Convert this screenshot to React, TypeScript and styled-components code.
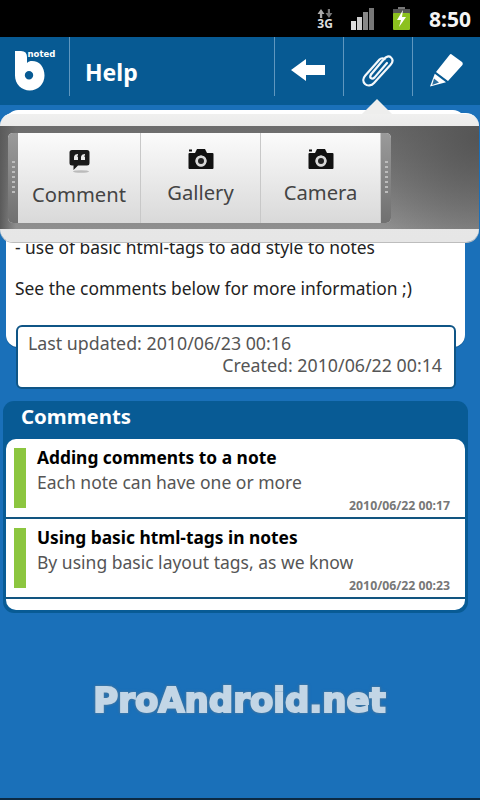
import React from "react";
import styled, { createGlobalStyle } from "styled-components";

const Global = createGlobalStyle`
  html, body { margin: 0; padding: 0; background: #1a70b9; }
  * { box-sizing: border-box; }
`;

const Screen = styled.div`
  position: relative;
  width: 480px;
  height: 800px;
  overflow: hidden;
  display: flex;
  flex-direction: column;
  background: #1a70b9;
  font-family: "Noto Sans", "Open Sans", sans-serif;
  border-bottom: 2px solid #0b2a44;
`;

const StatusBar = styled.div`
  height: 37px;
  flex: none;
  background: #000;
  display: flex;
  align-items: center;
  justify-content: flex-end;
  padding-right: 9px;
`;

const StatusClock = styled.span`
  color: #f4f4f4;
  font: 700 21px "Noto Sans", sans-serif;
  margin-left: 19px;
`;

const StatusIconGap = styled.span<{ $w: number }>`
  display: flex;
  flex-direction: column;
  align-items: center;
  width: ${(p) => p.$w}px;
  margin-left: 18px;
`;

const NetLabel = styled.span`
  color: #ddd;
  font: 700 12px/11px "Noto Sans", sans-serif;
`;

const Header = styled.header`
  height: 68px;
  flex: none;
  background: #075a93;
  display: flex;
  align-items: flex-start;
`;

const HeaderCell = styled.div<{ $w: number }>`
  width: ${(p) => p.$w}px;
  height: 59px;
  flex: none;
  display: flex;
  align-items: center;
  justify-content: center;
  padding-top: 7px;
  border-right: 1px solid #5f97bf;
  &:last-child { border-right: none; }
`;

const TitleCell = styled.div`
  flex: 1;
  height: 59px;
  display: flex;
  align-items: center;
  padding: 10px 0 0 15px;
  border-right: 1px solid #5f97bf;
`;

const Title = styled.h1`
  margin: 0;
  color: #fff;
  font-size: 23px;
  font-weight: 700;
  line-height: 30px;
`;

const LogoWrap = styled.div`
  position: relative;
  width: 42px;
  height: 40px;
  margin-left: 2px;
  margin-top: 1px;
`;

const LogoWord = styled.span`
  position: absolute;
  left: 13px;
  top: -2px;
  color: #fff;
  font: 700 8.5px "DejaVu Sans", sans-serif;
`;

const Body = styled.main`
  flex: 1;
  display: flex;
  flex-direction: column;
  padding: 5px 3px 0 3px;
`;

const NoteCard = styled.section`
  height: 237px;
  margin: 0 12px 0 3px;
  padding: 0 10px 8px 9px;
  background: #fff;
  border-radius: 12px;
  box-shadow: 0 1px 0 #0d5a96;
  display: flex;
  flex-direction: column;
  justify-content: flex-end;
  color: #222;
  font-size: 17.4px;
  line-height: 20.5px;
`;

const NoteLine = styled.p`
  margin: 0 0 20.5px;
  white-space: nowrap;
  &:last-child { margin-bottom: 0; }
`;

const MetaBox = styled.div`
  position: relative;
  height: 64px;
  margin: -22px 21px 0 13px;
  padding: 5px 12px 0 10px;
  background: #fff;
  border: 2px solid #0f5586;
  border-radius: 6px;
  color: #555;
  font-size: 17.8px;
  line-height: 22px;
`;

const MetaRight = styled.div`
  text-align: right;
`;

const CommentsPanel = styled.section`
  margin: 12px 9px 0 0;
  padding: 0 3px 3px;
  background: #085b95;
  border-radius: 11px;
`;

const CommentsHead = styled.h2`
  margin: 0;
  height: 38px;
  padding-left: 15px;
  color: #fff;
  font-size: 20.4px;
  font-weight: 700;
  line-height: 31px;
`;

const CommentList = styled.div`
  background: #fff;
  border-radius: 10px;
  padding-bottom: 11px;
`;

const Row = styled.article`
  position: relative;
  height: 80px;
  display: flex;
  padding: 9px 0 0 8px;
  border-bottom: 2px solid #125580;
`;

const Marker = styled.span`
  width: 12px;
  height: 60px;
  flex: none;
  background: #8cc63f;
`;

const RowText = styled.div`
  margin: -1px 0 0 11px;
`;

const RowTitle = styled.div`
  color: #000;
  font-size: 17.35px;
  font-weight: 700;
  line-height: 20px;
`;

const RowSub = styled.div`
  color: #555;
  font-size: 17.5px;
  line-height: 24px;
  margin-top: 3px;
`;

const RowDate = styled.time`
  position: absolute;
  right: 15px;
  bottom: 4px;
  color: #777;
  font-size: 12.25px;
  font-weight: 700;
  line-height: 14px;
`;

const Watermark = styled.div`
  margin-top: 67px;
  text-align: center;
  margin-right: 1px;
  font: 700 34px/40px "DejaVu Sans", sans-serif;
  color: #c3d6e6;
  -webkit-text-stroke: 2px #c3d6e6;
  filter: drop-shadow(0 0 1px #3f74a0) drop-shadow(0 0 1px #3f74a0);
`;

/* overlay */
const Popup = styled.div`
  position: absolute;
  left: 0;
  top: 113px;
  width: 479px;
  height: 129px;
  padding: 12px 0 13px;
  background: linear-gradient(#f0f0ef, #e9e9e9 12%, #e6e6e6);
  border-radius: 13px;
  border-top: 1px solid #fff;
  box-shadow: 0 1px 0 #bdbdbd;
`;

const PopupArrow = styled.span`
  position: absolute;
  left: 362px;
  top: -15px;
  width: 0;
  height: 0;
  border-left: 15px solid transparent;
  border-right: 15px solid transparent;
  border-bottom: 15px solid #eeeeed;
`;

const Band = styled.div`
  height: 103px;
  padding: 7px 0 0 8px;
  background:
    radial-gradient(circle at 100% 10%, #555 0, rgba(85, 85, 85, 0) 130px),
    linear-gradient(90deg, #5a5a5a 0, rgba(90, 90, 90, 0) 16px),
    linear-gradient(#6c6c6c, #8f8f8f);
`;

const Tray = styled.div`
  width: 383px;
  height: 90px;
  display: flex;
  border-radius: 5px;
  overflow: hidden;
  background: linear-gradient(#fbfbfb, #d9d9d9);
`;

const Handle = styled.div`
  width: 10px;
  flex: none;
  background: linear-gradient(#9a9a9a, #707070);
  display: flex;
  align-items: center;
  justify-content: center;
`;

const Dots = styled.span`
  width: 3px;
  height: 34px;
  background: repeating-linear-gradient(#bcbcbc 0 2px, transparent 2px 5px);
`;

const Action = styled.div<{ $w: number; $low?: boolean }>`
  width: ${(p) => p.$w}px;
  flex: none;
  display: flex;
  flex-direction: column;
  align-items: center;
  padding-top: ${(p) => (p.$low ? 16 : 14)}px;
  border-right: 1px solid #c8c8c8;
  color: #444;
  font-size: 20.2px;
  line-height: 32px;
  &:last-of-type { border-right: none; }
`;

const ActionIcon = styled.span`
  display: flex;
  height: 24px;
  margin-bottom: 5px;
`;

const Arrow = () => (
  <svg width="36" height="22" viewBox="0 0 36 22">
    <path d="M0 11 L15 0 V6 H34 V16 H15 V22 Z" fill="#fff" />
  </svg>
);

const Clip = () => (
  <svg width="34" height="34" viewBox="0 0 34 34" fill="none" stroke="#f4f8fb" strokeWidth="2.2" strokeLinecap="round" strokeLinejoin="round">
    <path d="M10 21.5 L23 6 C25 3.5 28 2.5 30 4.5 C32.2 6.5 31.6 9.5 29.6 11.8 L13 30 C10.5 32.8 6.5 33.4 4 31 C1.5 28.6 2 25 4.3 22.4 L18.5 6.5 C20.2 4.8 22.4 5 23.6 6.2" />
    <path d="M10 21.5 C9 23 9 24.4 10 25.2 C11 26 12.4 25.6 13.6 24.4 L26 10" />
  </svg>
);

const Pencil = () => (
  <svg width="33" height="33" viewBox="0 0 33 33">
    <path d="M21 0 L32 8 Q33.5 9.5 32 11.5 L18 27 L6 18 L19.5 1 Q20 0 21 0 Z" fill="#fff" />
    <path d="M4.8 19.8 L16 28.2 L0 32.5 Z" fill="#fff" />
    <path d="M4 24.5 L9 28.5 L2.2 31 Z" fill="#2b6f9f" />
  </svg>
);

const LogoB = () => (
  <svg width="30" height="40" viewBox="0 0 30 40" style={{ position: "absolute", left: 0, top: 0 }}>
    <path fillRule="evenodd" fill="#fff" d="M0 0 H6 Q12 0 12 6 V12 C13.5 10.5 15 10 17 10 C24.5 10 29.5 16 29.5 24.5 C29.5 33 23 39.5 14.8 39.5 C6.5 39.5 0 33 0 24.5 Z M14 20 A4.2 4.2 0 1 0 14.01 28.4 A4.2 4.2 0 1 0 14 20 Z" />
  </svg>
);

const NetArrows = () => (
  <svg width="16" height="9" viewBox="0 0 16 9">
    <path d="M0.5 5 L4 0 L7.5 5 H5.2 V9 H2.9 V5 Z" fill="#aaa" />
    <path d="M8.5 4 H10.8 V0 H13 V4 H15.4 L12 9 Z" fill="#777" />
  </svg>
);

const Signal = () => (
  <svg width="24" height="22" viewBox="0 0 24 22">
    <rect x="0" y="13" width="5" height="9" fill="#ddd" />
    <rect x="6" y="9" width="5" height="13" fill="#ccc" />
    <rect x="12" y="4" width="5" height="18" fill="#888" />
    <rect x="18" y="0" width="5" height="22" fill="#777" />
  </svg>
);

const Battery = () => (
  <svg width="17" height="23" viewBox="0 0 17 23">
    <rect x="5" y="0" width="7" height="3" fill="#777" />
    <rect x="0" y="2" width="17" height="5" fill="#555" />
    <rect x="0" y="6" width="17" height="17" fill="#8cc11f" rx="1" />
    <path d="M10 3 L4 13 H8 L6 20 L13 10 H9 Z" fill="#fff" />
  </svg>
);

const Bubble = () => (
  <svg width="21" height="24" viewBox="0 0 21 24">
    <path d="M3 1 H18 Q20.5 1 20.5 3.5 V14 Q20.5 16.5 18 16.5 H9 L4.5 21 V16.5 H3 Q0.5 16.5 0.5 14 V3.5 Q0.5 1 3 1 Z" fill="#1a1a1a" />
    <path d="M9 5 L6.5 5.5 Q5 6.5 5 8 V11 H9 V7.5 H7.8 Q8 6.8 9 6.6 Z M16 5 L13.5 5.5 Q12 6.5 12 8 V11 H16 V7.5 H14.8 Q15 6.8 16 6.6 Z" fill="#e8e8e8" />
    <ellipse cx="12" cy="22.5" rx="8" ry="1.3" fill="#bbb" />
  </svg>
);

const Camera = () => (
  <svg width="26" height="24" viewBox="0 0 26 24">
    <path fillRule="evenodd" fill="#111" d="M1.5 6 H7 L9 2 H17 L19 6 H24.5 Q25.5 6 25.5 7 V21 Q25.5 22 24.5 22 H1.5 Q0.5 22 0.5 21 V7 Q0.5 6 1.5 6 Z M13 8.5 A5.5 5.5 0 1 0 13.01 19.5 A5.5 5.5 0 1 0 13 8.5 Z" />
    <rect x="1" y="2.5" width="3" height="2" fill="#111" />
    <circle cx="13" cy="14" r="5.5" fill="#d8d8d8" />
    <circle cx="13" cy="14" r="3" fill="#222" />
  </svg>
);

export default function App() {
  return (
    <Screen>
      <Global />
      <StatusBar>
        <StatusIconGap $w={16}><NetArrows /><NetLabel>3G</NetLabel></StatusIconGap>
        <StatusIconGap $w={24}><Signal /></StatusIconGap>
        <StatusIconGap $w={17}><Battery /></StatusIconGap>
        <StatusClock>8:50</StatusClock>
      </StatusBar>
      <Header>
        <HeaderCell $w={70}>
          <LogoWrap>
            <LogoB />
            <LogoWord>noted</LogoWord>
          </LogoWrap>
        </HeaderCell>
        <TitleCell><Title>Help</Title></TitleCell>
        <HeaderCell $w={69}><Arrow /></HeaderCell>
        <HeaderCell $w={69}><Clip /></HeaderCell>
        <HeaderCell $w={67}><Pencil /></HeaderCell>
      </Header>
      <Body>
        <NoteCard>
          <NoteLine>- use of basic html-tags to add style to notes</NoteLine>
          <NoteLine>See the comments below for more information ;)</NoteLine>
          <NoteLine>&nbsp;</NoteLine>
        </NoteCard>
        <MetaBox>
          <div>Last updated: 2010/06/23 00:16</div>
          <MetaRight>Created: 2010/06/22 00:14</MetaRight>
        </MetaBox>
        <CommentsPanel>
          <CommentsHead>Comments</CommentsHead>
          <CommentList>
            <Row>
              <Marker />
              <RowText>
                <RowTitle>Adding comments to a note</RowTitle>
                <RowSub>Each note can have one or more</RowSub>
              </RowText>
              <RowDate>2010/06/22 00:17</RowDate>
            </Row>
            <Row>
              <Marker />
              <RowText>
                <RowTitle>Using basic html-tags in notes</RowTitle>
                <RowSub>By using basic layout tags, as we know</RowSub>
              </RowText>
              <RowDate>2010/06/22 00:23</RowDate>
            </Row>
          </CommentList>
        </CommentsPanel>
        <Watermark>ProAndroid.net</Watermark>
      </Body>
      <Popup>
        <PopupArrow />
        <Band>
          <Tray>
            <Handle><Dots /></Handle>
            <Action $w={123} $low>
              <ActionIcon><Bubble /></ActionIcon>
              Comment
            </Action>
            <Action $w={120}>
              <ActionIcon><Camera /></ActionIcon>
              Gallery
            </Action>
            <Action $w={120}>
              <ActionIcon><Camera /></ActionIcon>
              Camera
            </Action>
            <Handle><Dots /></Handle>
          </Tray>
        </Band>
      </Popup>
    </Screen>
  );
}
